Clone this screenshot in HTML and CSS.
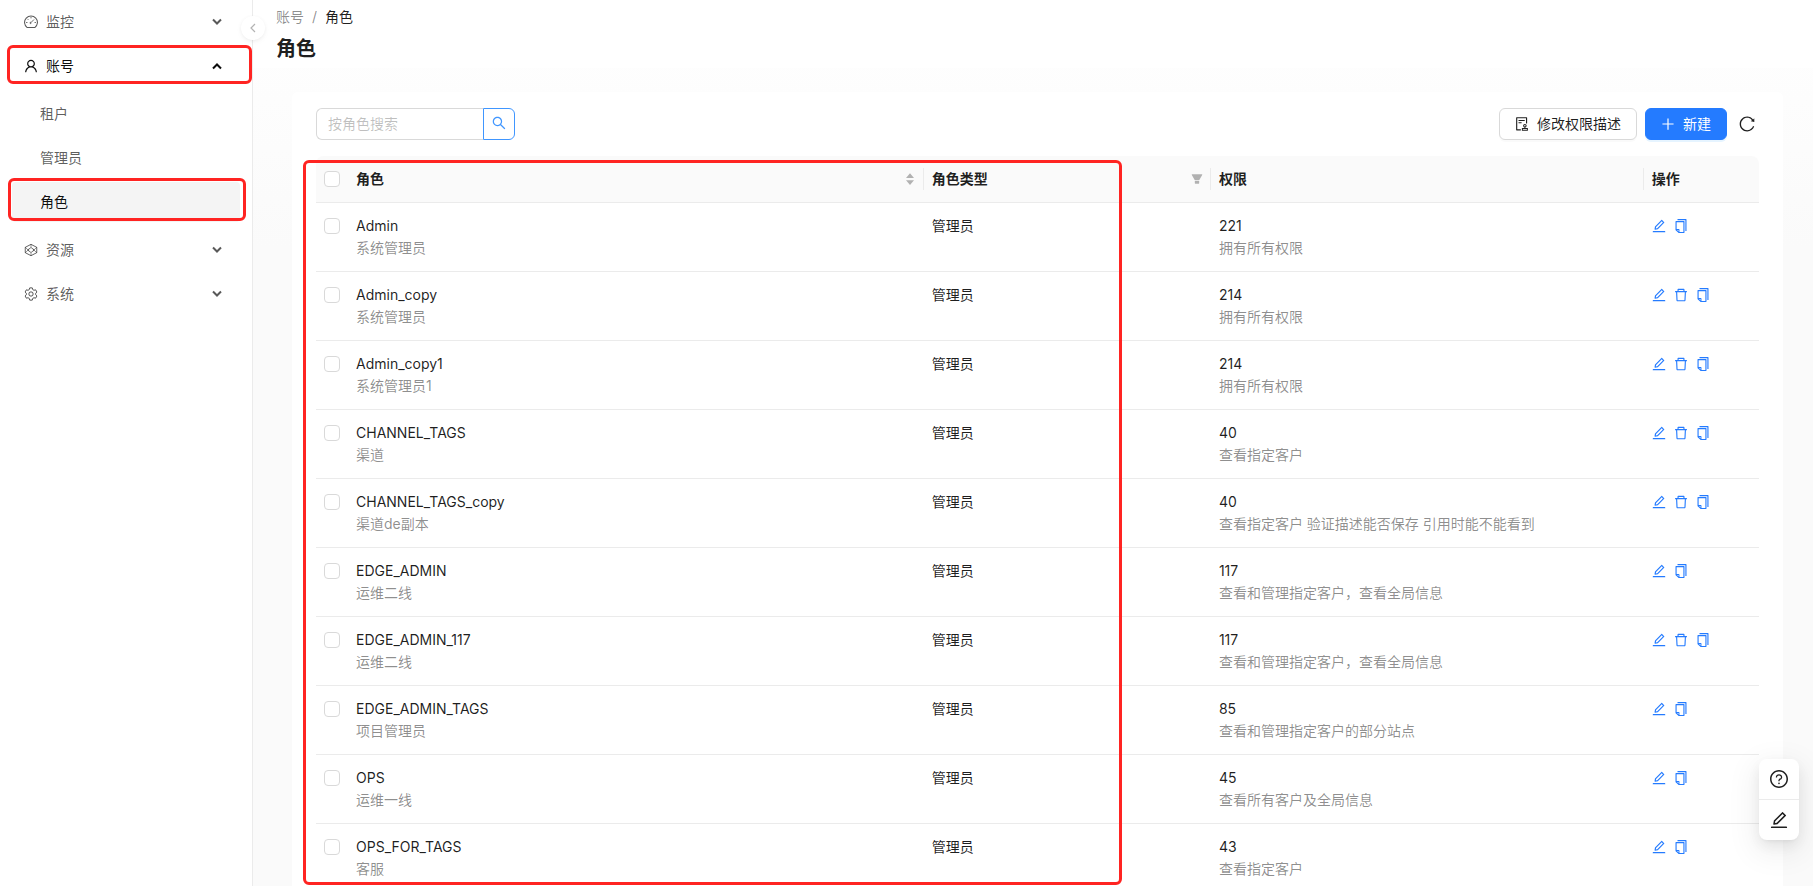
FILE: index.html
```html
<!DOCTYPE html>
<html lang="zh-CN">
<head>
<meta charset="utf-8">
<title>角色</title>
<link rel="stylesheet" href="styles.css">
</head>
<body>
<svg class="sprite" aria-hidden="true">
  <symbol id="i-edit" viewBox="64 64 896 896"><path d="M257.7 752c2 0 4-.2 6-.5L431.9 722c2-.4 3.9-1.3 5.3-2.8l423.9-423.9a9.96 9.96 0 000-14.1L694.9 114.9c-1.9-1.9-4.4-2.9-7.1-2.9s-5.2 1-7.1 2.9L256.8 538.8c-1.5 1.5-2.4 3.3-2.8 5.3l-29.5 168.2a33.5 33.5 0 009.4 29.8c6.6 6.4 14.9 9.9 23.8 9.9zm67.4-174.4L687.8 215l73.3 73.3-362.7 362.6-88.9 15.7 15.6-89zM880 836H144c-17.7 0-32 14.3-32 32v36c0 4.4 3.6 8 8 8h784c4.4 0 8-3.6 8-8v-36c0-17.7-14.3-32-32-32z"/></symbol>
  <symbol id="i-delete" viewBox="64 64 896 896"><path d="M360 184h-8c4.4 0 8-3.6 8-8v8h304v-8c0 4.4 3.6 8 8 8h-8v72h72v-80c0-35.3-28.7-64-64-64H352c-35.3 0-64 28.7-64 64v80h72v-72zm504 72H160c-17.7 0-32 14.3-32 32v32c0 4.4 3.6 8 8 8h60.4l24.7 523c1.6 34.1 29.8 61 63.9 61h454c34.2 0 62.3-26.8 63.9-61l24.7-523H888c4.4 0 8-3.6 8-8v-32c0-17.7-14.3-32-32-32zM731.3 840H292.7l-24.2-512h487l-24.2 512z"/></symbol>
  <symbol id="i-copy" viewBox="64 64 896 896"><path d="M832 64H296c-4.4 0-8 3.6-8 8v56c0 4.4 3.6 8 8 8h496v688c0 4.4 3.6 8 8 8h56c4.4 0 8-3.6 8-8V96c0-17.7-14.3-32-32-32zM704 192H192c-17.7 0-32 14.3-32 32v530.7c0 8.5 3.4 16.6 9.4 22.6l173.3 173.3c2.2 2.2 4.7 4 7.4 5.5v1.9h4.2c3.5 1.3 7.2 2 11 2H704c17.7 0 32-14.3 32-32V224c0-17.7-14.3-32-32-32zM350 856.2L263.9 770H350v86.2zM664 888H414V746c0-22.1-17.9-40-40-40H232V264h432v624z"/></symbol>
  <symbol id="i-search" viewBox="64 64 896 896"><path d="M909.6 854.5L649.9 594.8C690.2 542.7 712 479 712 412c0-80.2-31.3-155.4-87.9-212.1-56.6-56.7-132-87.9-212.1-87.9s-155.5 31.3-212.1 87.9C143.2 256.5 112 331.8 112 412c0 80.1 31.3 155.5 87.9 212.1C256.5 680.8 331.8 712 412 712c67 0 130.6-21.8 182.7-62l259.7 259.6a8.2 8.2 0 0011.6 0l43.6-43.5a8.2 8.2 0 000-11.6zM570.4 570.4C528 612.7 471.8 636 412 636s-116-23.3-158.4-65.6C211.3 528 188 471.8 188 412s23.3-116.1 65.6-158.4C296 211.3 352.2 188 412 188s116.1 23.2 158.4 65.6S636 352.2 636 412s-23.3 116.1-65.6 158.4z"/></symbol>
  <symbol id="i-user" viewBox="64 64 896 896"><path d="M858.5 763.6a374 374 0 00-80.6-119.5 375.63 375.63 0 00-119.5-80.6c-.4-.2-.8-.3-1.2-.5C719.5 518 760 444.7 760 362c0-137-111-248-248-248S264 225 264 362c0 82.7 40.5 156 102.8 201.1-.4.2-.8.3-1.2.5-44.8 18.9-85 46-119.5 80.6a375.63 375.63 0 00-80.6 119.5A371.7 371.7 0 00136 901.8a8 8 0 008 8.2h60c4.4 0 7.9-3.5 8-7.8 2-77.2 33-149.5 87.8-204.3 56.7-56.7 132-87.9 212.2-87.9s155.5 31.2 212.2 87.9C779 752.7 810 825 812 902.2c.1 4.4 3.6 7.8 8 7.8h60a8 8 0 008-8.2c-1-47.8-10.9-94.3-29.5-138.2zM512 534c-45.9 0-89.1-17.9-121.6-50.4S340 407.9 340 362c0-45.9 17.9-89.1 50.4-121.6S466.1 190 512 190s89.1 17.9 121.6 50.4S684 316.1 684 362c0 45.9-17.9 89.1-50.4 121.6S557.9 534 512 534z"/></symbol>
  <symbol id="i-dashboard" viewBox="64 64 896 896"><g fill="none" stroke="currentColor" stroke-width="68"><path d="M268 868A412 412 0 1 1 756 868Z" stroke-linejoin="round"/><path d="M512 190v90M194 544h92M738 544h92M286 314l60 60M520 536L706 350" stroke-width="56"/><circle cx="484" cy="572" r="42" stroke-width="50"/></g></symbol>
  <symbol id="i-resource" viewBox="64 64 896 896"><g fill="none" stroke="currentColor" stroke-width="60" stroke-linejoin="round"><path d="M512 150L880 340V684L512 874L144 684V340Z"/><path d="M512 352L730 512L512 672L294 512Z" stroke-width="48"/><path d="M512 150V352M512 672V874M144 340L410 590M880 340L614 590M144 684L410 434M880 684L614 434" stroke-width="40"/></g></symbol>
  <symbol id="i-setting" viewBox="64 64 896 896"><g fill="none" stroke="currentColor" stroke-width="64" stroke-linejoin="round"><path d="M430 120H594L622 228L700 274L808 244L890 386L812 464V560L890 638L808 780L700 750L622 796L594 904H430L402 796L324 750L216 780L134 638L212 560V464L134 386L216 244L324 274L402 228Z"/><circle cx="512" cy="512" r="138"/></g></symbol>
  <symbol id="i-audit" viewBox="64 64 896 896"><path d="M296 250c-4.400 0-8 3.600-8 8v48c0 4.400 3.600 8 8 8h384c4.400 0 8-3.600 8-8v-48c0-4.400-3.600-8-8-8H296zm184 144H296c-4.400 0-8 3.600-8 8v48c0 4.400 3.600 8 8 8h184c4.400 0 8-3.600 8-8v-48c0-4.400-3.600-8-8-8zm-48 458H208V148h560v320c0 4.400 3.600 8 8 8h56c4.400 0 8-3.600 8-8V108c0-17.700-14.300-32-32-32H168c-17.700 0-32 14.300-32 32v784c0 17.700 14.300 32 32 32h264c4.400 0 8-3.600 8-8v-56c0-4.400-3.600-8-8-8zm440-88H728v-36.600c46.300-13.800 80-56.600 80-107.400 0-61.900-50.100-112-112-112s-112 50.100-112 112c0 50.700 33.700 93.600 80 107.400V764H520c-8.800 0-16 7.200-16 16v152c0 8.800 7.200 16 16 16h352c8.800 0 16-7.200 16-16V780c0-8.800-7.200-16-16-16zM646 620c0-27.600 22.400-50 50-50s50 22.400 50 50-22.400 50-50 50-50-22.400-50-50zm180 266H566v-60h260v60z"/></symbol>
  <symbol id="i-plus" viewBox="64 64 896 896"><path d="M474 152h76v322h318v76H550v322h-76V550H156v-76h318z"/></symbol>
  <symbol id="i-reload" viewBox="64 64 896 896"><path d="M909.1 209.3l-56.4 44.1C775.8 155.1 656.2 92 521.9 92 290 92 102.3 279.5 102 511.5 101.7 743.7 289.8 932 521.9 932c181.3 0 335.800-115 394.600-276.100 1.500-4.200-.7-8.900-4.900-10.300l-56.700-19.500a8 8 0 00-10.100 4.800c-1.800 5-3.800 10-5.900 14.900-17.300 41-42.100 77.800-73.700 109.400A344.770 344.770 0 01655.900 829c-42.300 17.900-87.400 27-133.800 27-46.500 0-91.500-9.100-133.800-27A341.500 341.500 0 01279 755.200a342.160 342.160 0 01-73.700-109.400c-17.900-42.400-27-87.400-27-133.900s9.100-91.500 27-133.900c17.300-41 42.100-77.800 73.700-109.400 31.600-31.600 68.400-56.400 109.300-73.800 42.300-17.900 87.400-27 133.800-27 46.500 0 91.500 9.100 133.800 27a341.500 341.500 0 01109.300 73.800c9.900 9.900 19.200 20.400 27.800 31.400l-60.200 47a8 8 0 003 14.100l175.600 43c5 1.200 9.900-2.600 9.900-7.700l.8-180.900c-.1-6.600-7.800-10.300-13-6.200z"/></symbol>
  <symbol id="i-help" viewBox="64 64 896 896"><path d="M512 64C264.600 64 64 264.600 64 512s200.600 448 448 448 448-200.600 448-448S759.400 64 512 64zm0 820c-205.400 0-372-166.600-372-372s166.600-372 372-372 372 166.600 372 372-166.600 372-372 372z"/><path d="M623.600 316.700C593.600 290.400 554 276 512 276s-81.600 14.500-111.600 40.700C369.200 344 352 380.700 352 420v7.600c0 4.400 3.600 8 8 8h48c4.400 0 8-3.600 8-8V420c0-44.100 43.100-80 96-80s96 35.900 96 80c0 31.100-22 59.600-56.100 72.700-21.200 8.100-39.200 22.300-52.100 40.900-13.100 19-19.900 41.800-19.900 64.900V620c0 4.400 3.600 8 8 8h48c4.400 0 8-3.600 8-8v-22.700a48.300 48.300 0 0130.900-44.800c59-22.700 97.100-74.700 97.100-132.500.1-39.300-17.100-76-48.300-103.300zM472 732a40 40 0 1080 0 40 40 0 10-80 0z"/></symbol>
  <symbol id="i-filter" viewBox="64 64 896 896"><path d="M349 838c0 17.700 14.200 32 31.800 32h262.400c17.600 0 31.800-14.300 31.800-32V642H349v196zm531.100-684H143.900c-24.500 0-39.800 26.700-27.500 48l221.300 376h348.800l221.300-376c12.100-21.300-3.200-48-27.700-48z"/></symbol>
  <symbol id="i-sort" viewBox="0 0 12 16"><path d="M6 2.200L10 6.900H2ZM2 9.300H10L6 14Z"/></symbol>
  <symbol id="i-down" viewBox="0 0 12 12"><path d="M2 3.500L6 7.500L10 3.500" fill="none" stroke="currentColor" stroke-width="2"/></symbol>
  <symbol id="i-up" viewBox="0 0 12 12"><path d="M2 8.500L6 4.500L10 8.500" fill="none" stroke="currentColor" stroke-width="2"/></symbol>
  <symbol id="i-left" viewBox="0 0 12 12"><path d="M8 2L4 6L8 10" fill="none" stroke="currentColor" stroke-width="1.200"/></symbol>
</svg>

<div class="layout">
  <aside class="sider">
    <nav class="menu" aria-label="主菜单">
      <button class="menu-item"><svg class="icon"><use href="#i-dashboard"/></svg><span>监控</span><svg class="arrow"><use href="#i-down"/></svg></button>
      <button class="menu-item menu-item-open" aria-expanded="true"><svg class="icon"><use href="#i-user"/></svg><span>账号</span><svg class="arrow"><use href="#i-up"/></svg></button>
      <div class="submenu">
        <a class="menu-link" href="#">租户</a>
        <a class="menu-link" href="#">管理员</a>
        <a class="menu-link menu-link-selected" href="#" aria-current="page">角色</a>
      </div>
      <button class="menu-item"><svg class="icon"><use href="#i-resource"/></svg><span>资源</span><svg class="arrow"><use href="#i-down"/></svg></button>
      <button class="menu-item"><svg class="icon"><use href="#i-setting"/></svg><span>系统</span><svg class="arrow"><use href="#i-down"/></svg></button>
    </nav>
    <button class="collapse" aria-label="收起菜单"><svg class="collapse-icon"><use href="#i-left"/></svg></button>
    <div class="mark mark-account"></div>
    <div class="mark mark-role"></div>
  </aside>

  <main class="main">
    <header class="page-header">
      <nav class="breadcrumb" aria-label="面包屑"><a href="#">账号</a><span>/</span><span class="current">角色</span></nav>
      <h1 class="title">角色</h1>
    </header>
    <section class="card">
      <div class="toolbar">
        <form class="search">
          <input class="search-input" type="text" placeholder="按角色搜索" aria-label="按角色搜索">
          <button class="search-button" type="button" aria-label="搜索"><svg class="icon"><use href="#i-search"/></svg></button>
        </form>
        <div class="actions">
          <button class="button"><svg class="icon"><use href="#i-audit"/></svg><span>修改权限描述</span></button>
          <button class="button button-primary"><svg class="icon"><use href="#i-plus"/></svg><span>新建</span></button>
          <button class="reload" aria-label="刷新"><svg class="icon-large"><use href="#i-reload"/></svg></button>
        </div>
      </div>
      <table class="table">
        <colgroup><col class="col-check"><col class="col-role"><col class="col-type"><col class="col-perm"><col class="col-ops"></colgroup>
        <thead>
          <tr>
            <th><input class="check" type="checkbox" aria-label="全选"></th>
            <th><div class="head"><span>角色</span><svg class="sort"><use href="#i-sort"/></svg></div></th>
            <th><div class="head"><span>角色类型</span><svg class="filter"><use href="#i-filter"/></svg></div></th>
            <th><div class="head"><span>权限</span></div></th>
            <th><div class="head head-last"><span>操作</span></div></th>
          </tr>
        </thead>
        <tbody id="rows"></tbody>
      </table>
      <div class="mark mark-table"></div>
    </section>
  </main>
</div>

<div class="float-group">
  <button class="float-button" aria-label="帮助"><svg class="icon-float"><use href="#i-help"/></svg></button>
  <button class="float-button" aria-label="反馈"><svg class="icon-float"><use href="#i-edit"/></svg></button>
</div>
<script src="app.js"></script>
</body>
</html>
```

FILE: styles.css
```css
* { box-sizing: border-box; }

body {
  margin: 0;
  height: 100vh;
  overflow: hidden;
  font: 14px/22px Inter, "Noto Sans CJK SC", sans-serif;
  color: rgba(0, 0, 0, 0.88);
  background: #fff;
}

button, input { font: inherit; color: inherit; }
button { padding: 0; border: 0; background: none; cursor: pointer; }
a { color: inherit; text-decoration: none; }
svg { display: block; flex: none; fill: currentColor; }

.sprite { position: absolute; width: 0; height: 0; }
.icon { width: 14px; height: 14px; }
.icon-large { width: 16px; height: 16px; }
.icon-float { width: 18px; height: 18px; }

.layout { display: flex; height: 100vh; }

/* Sidebar */
.sider {
  position: relative;
  z-index: 2;
  flex: none;
  width: 253px;
  padding: 2px 12px;
  border-right: 1px solid #ebebeb;
  background: #fff;
}
.menu { display: flex; flex-direction: column; gap: 4px; }
.menu-item {
  display: flex;
  align-items: center;
  gap: 8px;
  height: 40px;
  padding: 0 17px 0 12px;
  color: rgba(0, 0, 0, 0.65);
}
.menu-item-open { color: rgba(0, 0, 0, 0.95); }
.arrow { width: 12px; height: 12px; margin-left: auto; }
.submenu { display: flex; flex-direction: column; gap: 4px; padding: 4px 0; }
.menu-link {
  height: 40px;
  padding-left: 28px;
  border-radius: 4px;
  line-height: 40px;
  color: rgba(0, 0, 0, 0.65);
}
.menu-link-selected { color: rgba(0, 0, 0, 0.95); background: #f4f4f4; }
.collapse {
  position: absolute;
  top: 16px;
  right: -13px;
  display: grid;
  place-items: center;
  width: 24px;
  height: 24px;
  border-radius: 50%;
  color: rgba(0, 0, 0, 0.3);
  background: #fff;
  box-shadow: 0 2px 8px -2px rgba(0, 0, 0, 0.06), 0 1px 4px -1px rgba(25, 15, 15, 0.08);
}
.collapse-icon { width: 12px; height: 12px; }

/* Highlight frames */
.mark {
  position: absolute;
  border: 3px solid #ff2422;
  border-radius: 6px;
  pointer-events: none;
}
.mark-account { top: 45px; left: 7px; right: 0; height: 39px; }
.mark-role { top: 178px; left: 8px; right: 6px; height: 43px; }
.mark-table { top: 68px; bottom: 1px; left: 11px; right: 661px; }

/* Page */
.main {
  display: flex;
  flex: 1;
  flex-direction: column;
  min-width: 0;
  background: linear-gradient(#fff, #fafafa 28%);
}
.page-header { height: 68px; padding: 6px 24px 0 23px; background: #fff; }
.breadcrumb { display: flex; gap: 8px; color: rgba(0, 0, 0, 0.45); }
.breadcrumb .current { color: rgba(0, 0, 0, 0.88); }
.title { margin: 5px 0 0; font-size: 20px; line-height: 32px; font-weight: 600; }

.card {
  position: relative;
  flex: 1;
  min-height: 0;
  margin: 24px 30px 0 39px;
  padding: 16px 24px 0;
  border-radius: 6px 6px 0 0;
  background: #fff;
}
.toolbar { display: flex; justify-content: space-between; margin-bottom: 16px; }
.search { display: flex; width: 199px; }
.search-input {
  flex: 1;
  min-width: 0;
  height: 32px;
  padding: 3px 11px 5px;
  border: 1px solid #d9d9d9;
  border-right: 0;
  border-radius: 6px 0 0 6px;
  outline: 0;
}
.search-input::placeholder { color: rgba(0, 0, 0, 0.25); }
.search-button {
  display: grid;
  place-items: center;
  width: 32px;
  height: 32px;
  padding-bottom: 2px;
  border: 1px solid #4096ff;
  border-radius: 0 6px 6px 0;
  color: #4096ff;
}
.actions { display: flex; align-items: center; gap: 8px; }
.button {
  display: flex;
  align-items: center;
  gap: 8px;
  height: 32px;
  padding: 0 15px;
  border: 1px solid #d9d9d9;
  border-radius: 6px;
  background: #fff;
  box-shadow: 0 2px 0 rgba(0, 0, 0, 0.02);
}
.button-primary {
  border-color: #247bff;
  color: #fff;
  background: #247bff;
  box-shadow: 0 2px 0 rgba(5, 145, 255, 0.1);
}
.reload { display: grid; place-items: center; width: 24px; height: 32px; }

/* Table */
.table { width: 100%; border-collapse: separate; border-spacing: 0; table-layout: fixed; }
.col-check { width: 32px; }
.col-role { width: 39.9%; }
.col-type { width: 19.9%; }
.col-perm { width: 30%; }
.table th {
  height: 47px;
  padding: 0 0 0 8px;
  border-bottom: 1px solid #ebebeb;
  background: #fafafa;
  text-align: left;
  font-weight: 600;
}
.table th:first-child { border-radius: 8px 0 0; }
.table th:last-child { border-radius: 0 8px 0 0; }
.head {
  display: flex;
  align-items: center;
  justify-content: space-between;
  height: 22px;
  padding-right: 7px;
  border-right: 1px solid #ebebeb;
}
.head-last { border-right: 0; }
.sort { width: 12px; height: 16px; color: rgba(0, 0, 0, 0.29); }
.filter { width: 12px; height: 12px; color: rgba(0, 0, 0, 0.29); }
.table td {
  padding: 12px 8px;
  border-bottom: 1px solid #ebebeb;
  vertical-align: top;
}
.check {
  display: block;
  width: 16px;
  height: 16px;
  margin: 0;
  border: 1px solid #d9d9d9;
  border-radius: 4px;
  background: #fff;
  appearance: none;
}
td .check { margin-top: 3px; }
.desc { color: rgba(0, 0, 0, 0.45); }
.ops { display: flex; align-items: center; gap: 8px; height: 22px; color: #247bff; }

/* Floating buttons */
.float-group {
  position: fixed;
  z-index: 3;
  right: 14px;
  bottom: 46px;
  width: 40px;
  border-radius: 8px;
  background: #fff;
  box-shadow: 0 6px 16px 0 rgba(0, 0, 0, 0.08), 0 3px 6px -4px rgba(0, 0, 0, 0.12), 0 9px 28px 8px rgba(0, 0, 0, 0.05);
}
.float-button { display: grid; place-items: center; width: 40px; height: 40px; }
.float-button + .float-button { height: 41px; border-top: 1px solid #ebebeb; }
```

FILE: app.js
```js
const roles = [
  ["Admin", "系统管理员", 221, "拥有所有权限", false],
  ["Admin_copy", "系统管理员", 214, "拥有所有权限", true],
  ["Admin_copy1", "系统管理员1", 214, "拥有所有权限", true],
  ["CHANNEL_TAGS", "渠道", 40, "查看指定客户", true],
  ["CHANNEL_TAGS_copy", "渠道de副本", 40, "查看指定客户 验证描述能否保存 引用时能不能看到", true],
  ["EDGE_ADMIN", "运维二线", 117, "查看和管理指定客户，查看全局信息", false],
  ["EDGE_ADMIN_117", "运维二线", 117, "查看和管理指定客户，查看全局信息", true],
  ["EDGE_ADMIN_TAGS", "项目管理员", 85, "查看和管理指定客户的部分站点", false],
  ["OPS", "运维一线", 45, "查看所有客户及全局信息", false],
  ["OPS_FOR_TAGS", "客服", 43, "查看指定客户", false],
];

const action = (icon, label) =>
  `<button aria-label="${label}"><svg class="icon"><use href="#i-${icon}"/></svg></button>`;

document.getElementById("rows").innerHTML = roles.map(([name, desc, count, scope, removable]) => `
  <tr>
    <td><input class="check" type="checkbox" aria-label="${name}"></td>
    <td><div>${name}</div><div class="desc">${desc}</div></td>
    <td>管理员</td>
    <td><div>${count}</div><div class="desc">${scope}</div></td>
    <td><div class="ops">${action("edit", "编辑")}${removable ? action("delete", "删除") : ""}${action("copy", "复制")}</div></td>
  </tr>`).join("");
```
